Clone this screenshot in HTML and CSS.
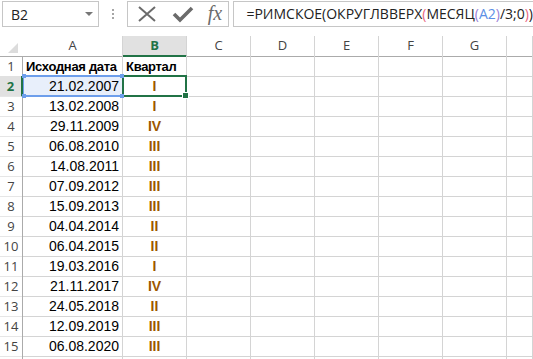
FILE: index.html
```html
<!DOCTYPE html>
<html lang="ru">
<head>
  <meta charset="UTF-8" />
  <title>Квартал римскими цифрами</title>
  <link rel="stylesheet" href="styles.css">
</head>
<body>
  <!-- Строка формул -->
  <div class="toolbar">
    <div class="name-box">
      <span>B2</span>
      <span class="drop"></span>
    </div>
    <div class="grip"><i></i><i></i><i></i></div>
    <div class="fx-box">
      <svg class="ico" width="22" height="18" viewBox="0 0 22 18">
        <path d="M3 2 L19 16 M19 2 L3 16" stroke="#6b6b6b" stroke-width="2" fill="none"/>
      </svg>
      <svg class="ico" width="22" height="18" viewBox="0 0 22 18">
        <path d="M2 9 L8 15 L20 3" stroke="#6b6b6b" stroke-width="3.6" fill="none"/>
      </svg>
      <span class="fx">fx</span>
    </div>
    <div class="formula">=РИМСКОЕ(ОКРУГЛВВЕРХ<span class="p1">(</span>МЕСЯЦ<span class="p2">(</span><span class="ref">A2</span><span class="p2">)</span>/3;0<span class="p1">)</span>)</div>
  </div>

  <!-- Лист -->
  <div class="sheet">
    <div class="row head">
      <div class="corner"><span class="tri"></span></div>
      <div class="ch">A</div>
      <div class="ch active">B</div>
      <div class="ch">C</div>
      <div class="ch">D</div>
      <div class="ch">E</div>
      <div class="ch">F</div>
      <div class="ch">G</div>
      <div class="ch"></div>
    </div>

    <div class="row">
      <div class="rh">1</div>
      <div class="c b">Исходная дата</div>
      <div class="c b">Квартал</div>
      <div class="c"></div><div class="c"></div><div class="c"></div><div class="c"></div><div class="c"></div><div class="c"></div>
    </div>
    <div class="row">
      <div class="rh active">2</div>
      <div class="c num refcell">21.02.2007<i class="h tl"></i><i class="h tr"></i><i class="h bl"></i><i class="h br"></i></div>
      <div class="c q selected">I<i class="fill"></i></div>
      <div class="c"></div><div class="c"></div><div class="c"></div><div class="c"></div><div class="c"></div><div class="c"></div>
    </div>
    <div class="row">
      <div class="rh">3</div>
      <div class="c num">13.02.2008</div>
      <div class="c q">I</div>
      <div class="c"></div><div class="c"></div><div class="c"></div><div class="c"></div><div class="c"></div><div class="c"></div>
    </div>
    <div class="row">
      <div class="rh">4</div>
      <div class="c num">29.11.2009</div>
      <div class="c q">IV</div>
      <div class="c"></div><div class="c"></div><div class="c"></div><div class="c"></div><div class="c"></div><div class="c"></div>
    </div>
    <div class="row">
      <div class="rh">5</div>
      <div class="c num">06.08.2010</div>
      <div class="c q">III</div>
      <div class="c"></div><div class="c"></div><div class="c"></div><div class="c"></div><div class="c"></div><div class="c"></div>
    </div>
    <div class="row">
      <div class="rh">6</div>
      <div class="c num">14.08.2011</div>
      <div class="c q">III</div>
      <div class="c"></div><div class="c"></div><div class="c"></div><div class="c"></div><div class="c"></div><div class="c"></div>
    </div>
    <div class="row">
      <div class="rh">7</div>
      <div class="c num">07.09.2012</div>
      <div class="c q">III</div>
      <div class="c"></div><div class="c"></div><div class="c"></div><div class="c"></div><div class="c"></div><div class="c"></div>
    </div>
    <div class="row">
      <div class="rh">8</div>
      <div class="c num">15.09.2013</div>
      <div class="c q">III</div>
      <div class="c"></div><div class="c"></div><div class="c"></div><div class="c"></div><div class="c"></div><div class="c"></div>
    </div>
    <div class="row">
      <div class="rh">9</div>
      <div class="c num">04.04.2014</div>
      <div class="c q">II</div>
      <div class="c"></div><div class="c"></div><div class="c"></div><div class="c"></div><div class="c"></div><div class="c"></div>
    </div>
    <div class="row">
      <div class="rh">10</div>
      <div class="c num">06.04.2015</div>
      <div class="c q">II</div>
      <div class="c"></div><div class="c"></div><div class="c"></div><div class="c"></div><div class="c"></div><div class="c"></div>
    </div>
    <div class="row">
      <div class="rh">11</div>
      <div class="c num">19.03.2016</div>
      <div class="c q">I</div>
      <div class="c"></div><div class="c"></div><div class="c"></div><div class="c"></div><div class="c"></div><div class="c"></div>
    </div>
    <div class="row">
      <div class="rh">12</div>
      <div class="c num">21.11.2017</div>
      <div class="c q">IV</div>
      <div class="c"></div><div class="c"></div><div class="c"></div><div class="c"></div><div class="c"></div><div class="c"></div>
    </div>
    <div class="row">
      <div class="rh">13</div>
      <div class="c num">24.05.2018</div>
      <div class="c q">II</div>
      <div class="c"></div><div class="c"></div><div class="c"></div><div class="c"></div><div class="c"></div><div class="c"></div>
    </div>
    <div class="row">
      <div class="rh">14</div>
      <div class="c num">12.09.2019</div>
      <div class="c q">III</div>
      <div class="c"></div><div class="c"></div><div class="c"></div><div class="c"></div><div class="c"></div><div class="c"></div>
    </div>
    <div class="row">
      <div class="rh">15</div>
      <div class="c num">06.08.2020</div>
      <div class="c q">III</div>
      <div class="c"></div><div class="c"></div><div class="c"></div><div class="c"></div><div class="c"></div><div class="c"></div>
    </div>
    <!-- следующая строка видна лишь на 3 пикселя -->
    <div class="row">
      <div class="rh"></div>
      <div class="c"></div><div class="c"></div>
      <div class="c"></div><div class="c"></div><div class="c"></div><div class="c"></div><div class="c"></div><div class="c"></div>
    </div>
  </div>
</body>
</html>
```

FILE: styles.css
```css
/* Базовые цвета Excel */
:root {
  --grid: #d4d4d4;
  --head-line: #ababab;
  --head-text: #444444;
  --green: #217346;
  --blue: #6d9eeb;
  --ui-border: #c6c6c6;
  --icon: #6b6b6b;
}

* {
  box-sizing: border-box;
}
body {
  margin: 0;
  background: #fff;
  font-family: "Liberation Sans", Arial, sans-serif;
  color: #000;
  overflow: hidden;
  height: 359px;
}

/* ---------- строка формул ---------- */
.toolbar {
  display: flex;
  align-items: flex-start;
  height: 36px;
  padding-top: 1px;
  font-family: "Open Sans", "Noto Sans", sans-serif;
}
.name-box {
  margin-left: 2px;
  width: 102px;
  height: 26px;
  border: 1px solid var(--ui-border);
  display: flex;
  align-items: center;
  justify-content: space-between;
  padding: 0 5px 0 8px;
  font-size: 14px;
  color: #222;
}
.drop {
  width: 0;
  height: 0;
  border-left: 4px solid transparent;
  border-right: 4px solid transparent;
  border-top: 4px solid #777;
}
.grip {
  width: 30px;
  height: 26px;
  display: flex;
  flex-direction: column;
  align-items: center;
  justify-content: center;
  gap: 2px;
}
.grip i {
  width: 2px;
  height: 2px;
  background: #a6a6a6;
}
.fx-box {
  width: 109px;
  height: 26px;
  border: 1px solid var(--ui-border);
  display: flex;
  align-items: center;
  padding-left: 8px;
  gap: 14px;
}
.fx {
  font-family: "Liberation Serif", serif;
  font-style: italic;
  font-size: 20px;
  color: var(--icon);
  margin-top: -2px;
}
.formula {
  flex: 1;
  height: 26px;
  margin-left: 4px;
  border: 1px solid var(--ui-border);
  border-right: 0;
  padding-left: 12px;
  font-size: 14px;
  line-height: 24px;
  white-space: nowrap;
  color: #222;
}
.formula .p1 { color: #e8667f; }
.formula .p2 { color: #9b7fd6; }
.formula .ref { color: #5b8fe6; }

/* ---------- сетка листа ---------- */
.row {
  display: grid;
  grid-template-columns: 23px 100px 64px 64px 64px 64px 64px 64px 1fr;
  height: 20px;
}
.row > div {
  border-right: 1px solid var(--grid);
  border-bottom: 1px solid var(--grid);
}

/* заголовки столбцов */
.head > div {
  border-bottom-color: var(--head-line);
}
.corner {
  position: relative;
  border-right-color: transparent !important;
}
.tri {
  position: absolute;
  right: 4px;
  bottom: 3px;
  width: 0;
  height: 0;
  border-left: 10px solid transparent;
  border-bottom: 10px solid #dcdcdc;
}
.ch {
  text-align: center;
  font-family: "Open Sans", "Noto Sans", sans-serif;
  font-size: 13px;
  line-height: 19px;
  color: var(--head-text);
}
.ch.active {
  background: #e1e1e1;
  color: var(--green);
  font-weight: bold;
  border-bottom: 2px solid var(--green) !important;
}

/* заголовки строк */
.rh {
  border-right-color: var(--head-line) !important;
  border-bottom-color: #e6e6e6 !important;
  font-family: "Open Sans", "Noto Sans", sans-serif;
  font-size: 13px;
  line-height: 20px;
  text-align: center;
  color: var(--head-text);
}
.rh.active {
  background: #e1e1e1;
  color: var(--green);
  font-weight: bold;
  border-right: 2px solid var(--green) !important;
}

/* ячейки */
.c {
  font-size: 14px;
  line-height: 19px;
  padding: 1px 3px 0;
  white-space: nowrap;
  overflow: visible;
}
.c.b {
  font-weight: bold;
  font-size: 13px;
  letter-spacing: -0.3px;
}
.c.num {
  text-align: right;
}
.c.q {
  text-align: center;
  font-weight: bold;
  color: #9c5700;
}

/* ссылка A2 в режиме правки */
.refcell {
  position: relative;
  background: #e8effb;
}
.refcell::after {
  content: "";
  position: absolute;
  left: 0;
  top: -1px;
  right: -1px;
  bottom: -1px;
  border: 2px solid var(--blue);
  border-left-width: 1px;
  border-right-width: 1px;
}
.refcell .h {
  position: absolute;
  width: 4px;
  height: 4px;
  background: var(--blue);
  z-index: 2;
}
.h.tl { left: -1px; top: -2px; }
.h.tr { right: -2px; top: -2px; }
.h.bl { left: -1px; bottom: -2px; }
.h.br { right: -2px; bottom: -2px; }

/* выделенная ячейка B2 */
.selected {
  position: relative;
}
.selected::after {
  content: "";
  position: absolute;
  left: -1px;
  top: -1px;
  right: -1px;
  bottom: -1px;
  border: 2px solid var(--green);
}
.selected .fill {
  position: absolute;
  right: -3px;
  bottom: -3px;
  width: 5px;
  height: 5px;
  background: var(--green);
  border: 1px solid #fff;
  box-sizing: content-box;
  z-index: 2;
}
```
